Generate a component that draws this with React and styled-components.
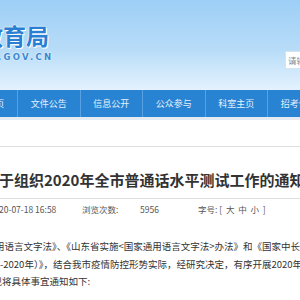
import React from 'react';
import styled, { createGlobalStyle } from 'styled-components';

const GlobalStyle = createGlobalStyle`
    html, body {
        margin:0;
        padding:0;
        background:#fff;
    }
    body {
        width:300px;
        height:300px;
        overflow:hidden;
        font-family:"Noto Sans CJK SC", "Noto Sans", sans-serif;
    }
`;

const Page = styled.div`
    width:300px;
    height:300px;
    overflow:hidden;
`;

const Header = styled.div`
    height:90px;
    background:linear-gradient(to bottom, #9dcff6 0%, #b7dcf8 55%, #e4f2fd 100%);
    display:flex;
    justify-content:space-between;
    align-items:flex-start;
`;

const Logo = styled.div`
    margin-left:-20px;
    padding-top:19px;
    display:flex;
    flex-direction:column;
`;

const LogoTitle = styled.div`
    font-size:23px;
    font-weight:700;
    line-height:32px;
    color:#2b7fd2;
    text-shadow:0 0 2px #fff, 0 0 1px #fff, 1px 1px 0 #fff;
`;

const LogoSub = styled.div`
    margin-left:18px;
    margin-top:1px;
    font-family:"DejaVu Sans", sans-serif;
    font-size:8.5px;
    font-weight:700;
    line-height:10px;
    letter-spacing:2.3px;
    color:#3b88cf;
    text-shadow:0 0 2px #fff;
`;

const Search = styled.div`
    margin-top:51px;
    width:40px;
    margin-right:-25px;
    height:18px;
    box-sizing:border-box;
    background:#fff;
    border:1px solid #d6e4ee;
    font-size:8.5px;
    line-height:16px;
    color:#888;
    padding-left:2px;
    white-space:nowrap;
`;

const Nav = styled.div`
    height:27px;
    background:#2983d3;
    display:flex;
    margin-left:-44.5px;
    width:400px;
`;

const NavItem = styled.div`
    flex:none;
    width:61.5px;
    border-right:1px solid #58a1e2;
    color:#e3f0fc;
    font-size:9px;
    line-height:27px;
    text-align:center;
    white-space:nowrap;
    &:last-child {
        border-right:none;
    }
`;

const Strip = styled.div`
    height:3px;
    background:#e4ebf2;
`;

const Article = styled.div`
    margin-top:26px;
`;

const TitleBox = styled.div`
    border-top:1px solid #dedede;
    border-bottom:1px solid #dedede;
    padding:23px 0 8px;
    height:20px;
    overflow:hidden;
`;

const Title = styled.h1`
    margin:0 0 0 -1px;
    font-size:15px;
    font-weight:700;
    line-height:20px;
    color:#333;
    white-space:nowrap;
`;

const Meta = styled.div`
    margin-top:4px;
    display:grid;
    grid-template-columns:82px 58px 58px auto;
    font-size:8.5px;
    line-height:12px;
    color:#555;
    white-space:pre;
`;

const MetaItem = styled.span`
    margin-left:${p => p.$shift || 0}px;
`;

const Body = styled.div`
    margin-top:23px;
    font-size:9.5px;
    line-height:17.5px;
    color:#333;
`;

const Line = styled.div`
    white-space:nowrap;
    margin-left:${p => p.$shift || 0}px;
`;

const navItems = ['网站首页', '文件公告', '信息公开', '公众参与', '科室主页', '招考信息'];

export default function App() {
    return (
        <Page>
            <GlobalStyle />
            <Header>
                <Logo>
                    <LogoTitle>教育局</LogoTitle>
                    <LogoSub>.GOV.CN</LogoSub>
                </Logo>
                <Search>请输入关键字</Search>
            </Header>
            <Nav>
                {navItems.map(item => (
                    <NavItem key={item}>{item}</NavItem>
                ))}
            </Nav>
            <Strip />
            <Article>
                <TitleBox>
                    <Title>于组织2020年全市普通话水平测试工作的通知</Title>
                </TitleBox>
                <Meta>
                    <MetaItem $shift={-1}>20-07-18 16:58</MetaItem>
                    <MetaItem>浏览次数:</MetaItem>
                    <MetaItem>5956</MetaItem>
                    <MetaItem>字号: [  大  中  小  ]</MetaItem>
                </Meta>
                <Body>
                    <Line $shift={-14.5}>通用语言文字法》、《山东省实施&lt;国家通用语言文字法&gt;办法》和《国家中长期</Line>
                    <Line>-2020年）》，结合我市疫情防控形势实际，经研究决定，有序开展2020年</Line>
                    <Line $shift={-7.5}>现将具体事宜通知如下:</Line>
                </Body>
            </Article>
        </Page>
    );
}
